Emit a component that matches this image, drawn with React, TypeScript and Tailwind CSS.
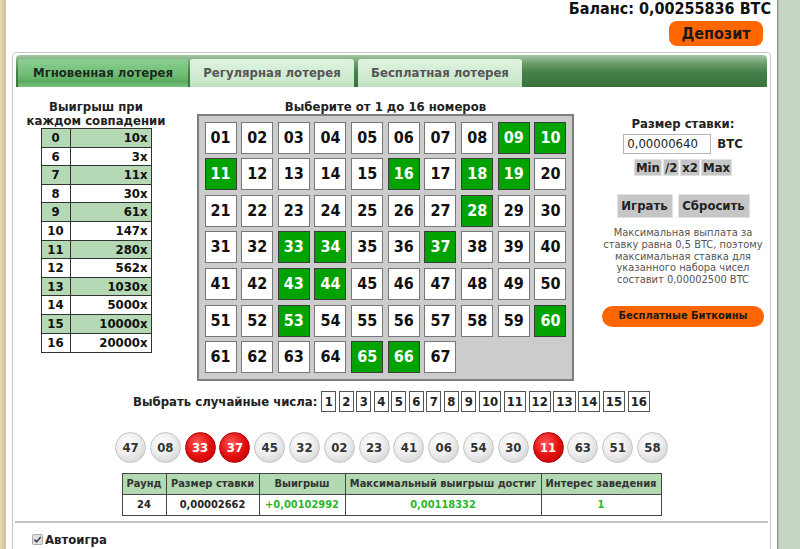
import React from "react";

const selected = new Set([9, 10, 11, 16, 18, 19, 28, 33, 34, 37, 43, 44, 53, 60, 65, 66]);

const payouts: [string, string][] = [
  ["0", "10x"],
  ["6", "3x"],
  ["7", "11x"],
  ["8", "30x"],
  ["9", "61x"],
  ["10", "147x"],
  ["11", "280x"],
  ["12", "562x"],
  ["13", "1030x"],
  ["14", "5000x"],
  ["15", "10000x"],
  ["16", "20000x"],
];

const balls: [string, boolean][] = [
  ["47", false],
  ["08", false],
  ["33", true],
  ["37", true],
  ["45", false],
  ["32", false],
  ["02", false],
  ["23", false],
  ["41", false],
  ["06", false],
  ["54", false],
  ["30", false],
  ["11", true],
  ["63", false],
  ["51", false],
  ["58", false],
];

function pad(n: number) {
  return n < 10 ? "0" + n : String(n);
}

export default function App() {
  const nums = Array.from({ length: 67 }, (_, i) => i + 1);
  const rnd = Array.from({ length: 16 }, (_, i) => i + 1);
  return (
    <div className="w-[800px] h-[549px] overflow-hidden flex bg-white font-['DejaVu_Sans_Condensed','DejaVu_Sans',sans-serif] text-[#111]">
      {/* left decorative strip */}
      <div className="w-[5px] shrink-0 bg-[linear-gradient(to_right,#e6dbb8,#cfc096)]" />
      <div className="w-[1px] shrink-0 bg-[#c9c9c9]" />

      {/* main column */}
      <div className="w-[771px] shrink-0 flex flex-col">
        {/* header */}
        <div className="shrink-0 flex flex-col items-end h-[52px]">
          <div className="pr-[6px] text-[16px] leading-[17px] font-bold text-[#111]">Баланс: 0,00255836 BTC</div>
          <div className="mr-[14px] mt-[4px] w-[94px] h-[25px] rounded-[8px] bg-[#ff6600] flex items-center justify-center text-[16px] font-bold text-[#1a1a1a]">
            Депозит
          </div>
        </div>

        {/* panel */}
        <div className="shrink-0 ml-[6px] w-[759px] h-[520px] border border-[#c8c8c8] rounded-[4px] px-[3px] pt-[2px]">
          {/* tab bar */}
          <div className="h-[32px] rounded-t-[4px] bg-[linear-gradient(to_bottom,#a6c7a6_0%,#6e9f6e_25%,#44804a_55%,#3a733b_100%)] flex items-end pl-[2px] gap-[2px]">
            <div className="w-[170px] h-[28px] rounded-t-[3px] bg-[linear-gradient(to_bottom,#8ccf91_0%,#6fbe74_55%,#5aaa5f_80%,#7cc381_100%)] flex items-center justify-center text-[13px] font-bold text-[#1c2a1c]">
              Мгновенная лотерея
            </div>
            <div className="w-[164px] h-[28px] rounded-t-[3px] bg-[linear-gradient(to_bottom,#dff3e0,#cdeacf_70%,#bfe0c2)] flex items-center justify-center text-[13px] font-bold text-[#555]">
              Регулярная лотерея
            </div>
            <div className="ml-[2px] w-[164px] h-[28px] rounded-t-[3px] bg-[linear-gradient(to_bottom,#dff3e0,#cdeacf_70%,#bfe0c2)] flex items-center justify-center text-[13px] font-bold text-[#555]">
              Бесплатная лотерея
            </div>
          </div>

          {/* content row */}
          <div className="flex pt-[13px] -mx-[3px]">
            {/* left column: payouts */}
            <div className="w-[166px] flex flex-col items-center">
              <div className="text-[13px] leading-[14px] font-bold text-center text-[#222]">
                Выигрыш при
                <br />
                каждом совпадении
              </div>
              <div className="mt-[0px] w-[111px] border border-[#333] flex flex-col">
                {payouts.map(([a, b], i) => (
                  <div
                    key={a}
                    className={
                      "flex h-[18.6px] text-[13px] font-bold " +
                      (i < payouts.length - 1 ? "border-b border-[#333] " : "") +
                      (i % 2 === 0 ? "bg-[#b4d9b4]" : "bg-white")
                    }
                  >
                    <div className="w-[29px] border-r border-[#333] flex items-center justify-center">{a}</div>
                    <div className="flex-1 flex items-center justify-end pr-[3px]">{b}</div>
                  </div>
                ))}
              </div>
            </div>

            {/* grid column */}
            <div className="ml-[18px] w-[377px] flex flex-col items-center">
              <div className="text-[13px] leading-[14px] font-bold text-[#222]">Выберите от 1 до 16 номеров</div>
              <div className="w-[377px] border-2 border-[#7e7e7e] bg-[#cccccc] p-[5.5px] grid grid-cols-10 gap-[4.67px]">
                {nums.map((n) => {
                  const s = selected.has(n);
                  return (
                    <div
                      key={n}
                      className={
                        "w-[32px] h-[32px] flex items-center justify-center text-[16px] font-bold border " +
                        (s ? "bg-[#00a300] border-[#3c3c3c] text-white" : "bg-white border-[#777] text-[#111]")
                      }
                    >
                      {pad(n)}
                    </div>
                  );
                })}
              </div>
            </div>

            {/* right column */}
            <div className="ml-[24px] w-[170px] flex flex-col items-center pt-[17px]">
              <div className="text-[13px] leading-[14px] font-bold text-[#222]">Размер ставки:</div>
              <div className="mt-[3px] flex items-center">
                <div className="w-[88px] h-[20px] border border-[#b5b5b5] bg-white flex items-center pl-[3px] text-[13px] text-[#222]">
                  0,00000640
                </div>
                <div className="ml-[6px] text-[13px] font-bold text-[#222]">BTC</div>
              </div>
              <div className="mt-[5px] flex gap-[1px] h-[17px]">
                {["Min", "/2", "x2", "Max"].map((t) => (
                  <div
                    key={t}
                    className="px-[1px] bg-[#c6c6c6] border border-[#e0e0e0] flex items-center justify-center text-[13px] font-bold text-[#222]"
                  >
                    {t}
                  </div>
                ))}
              </div>
              <div className="mt-[18px] flex gap-[5px]">
                <div className="w-[56px] h-[24px] bg-[#c6c6c6] border border-[#e2e2e2] flex items-center justify-center text-[13px] font-bold text-[#222]">
                  Играть
                </div>
                <div className="w-[72px] h-[24px] bg-[#c6c6c6] border border-[#e2e2e2] flex items-center justify-center text-[13px] font-bold text-[#222]">
                  Сбросить
                </div>
              </div>
              <div className="mt-[9px] text-[11px] leading-[11.75px] text-[#555] text-center">
                Максимальная выплата за
                <br />
                ставку равна 0,5 BTC, поэтому
                <br />
                максимальная ставка для
                <br />
                указанного набора чисел
                <br />
                составит 0,00002500 BTC
              </div>
              <div className="mt-[20px] w-[162px] h-[21px] rounded-full bg-[#ff6600] flex items-center justify-center text-[11px] font-bold text-[#1a1a1a]">
                Бесплатные Биткоины
              </div>
            </div>
          </div>

          {/* random picks */}
          <div className="mt-[10px] flex items-center justify-center -mx-[3px]">
            <div className="text-[13px] font-bold text-[#222] mr-[4px]">Выбрать случайные числа:</div>
            <div className="flex gap-[2.5px]">
              {rnd.map((n) => (
                <div
                  key={n}
                  className="h-[21px] px-[2px] min-w-[15px] border border-[#555] bg-white flex items-center justify-center text-[13px] font-bold text-[#222]"
                >
                  {n}
                </div>
              ))}
            </div>
          </div>

          {/* balls */}
          <div className="mt-[20px] flex justify-center gap-[3.8px] -mx-[3px]">
            {balls.map(([t, red], i) => (
              <div
                key={i}
                className={
                  "w-[31px] h-[31px] rounded-full flex items-center justify-center text-[13px] font-bold " +
                  (red
                    ? "bg-[radial-gradient(circle_at_40%_35%,#ff5a5a_0%,#e41010_50%,#b80000_100%)] text-white border border-[#b00000]"
                    : "bg-[radial-gradient(circle_at_40%_35%,#ffffff_0%,#eeeeee_45%,#c9c9c9_100%)] text-[#333] border border-[#c4c4c4]")
                }
              >
                {t}
              </div>
            ))}
          </div>

          {/* results table */}
          <div className="mt-[10px] flex justify-center -mx-[3px]">
            <div className="w-[540px] border border-[#444] text-[11px] font-bold">
              <div className="flex h-[21px] bg-[#b2d9b2] border-b border-[#444] text-[#333]">
                <div className="w-[44px] border-r border-[#444] flex items-center justify-center">Раунд</div>
                <div className="w-[93px] border-r border-[#444] flex items-center justify-center">Размер ставки</div>
                <div className="w-[86px] border-r border-[#444] flex items-center justify-center">Выигрыш</div>
                <div className="w-[196px] border-r border-[#444] flex items-center justify-center">Максимальный выигрыш достиг</div>
                <div className="flex-1 flex items-center justify-center">Интерес заведения</div>
              </div>
              <div className="flex h-[20px] bg-white">
                <div className="w-[44px] border-r border-[#444] flex items-center justify-center text-[#222]">24</div>
                <div className="w-[93px] border-r border-[#444] flex items-center justify-center text-[#222]">0,00002662</div>
                <div className="w-[86px] border-r border-[#444] flex items-center justify-center text-[#29b829]">+0,00102992</div>
                <div className="w-[196px] border-r border-[#444] flex items-center justify-center text-[#29b829]">0,00118332</div>
                <div className="flex-1 flex items-center justify-center text-[#29b829]">1</div>
              </div>
            </div>
          </div>

          {/* divider */}
          <div className="mt-[5px] h-[2px] bg-[#c4c4c4] -mx-[1px]" />

          {/* autoplay */}
          <div className="mt-[7px] flex items-center pl-[16px]">
            <div className="w-[11px] h-[11px] rounded-[2px] border border-[#a8a8a8] bg-[#e2e2e2] flex items-center justify-center">
              <svg width="9" height="9" viewBox="0 0 10 10">
                <path d="M1.5 5.2 L4 7.6 L8.6 2.2" stroke="#444" strokeWidth="1.8" fill="none" />
              </svg>
            </div>
            <div className="ml-[2px] text-[13px] font-bold text-[#222]">Автоигра</div>
          </div>
        </div>
      </div>

      {/* right edge */}
      <div className="w-[1px] shrink-0 bg-[#8d978d]" />
      <div className="w-[1px] shrink-0 bg-[#b3bfb1]" />
      <div className="flex-1 bg-[#c6d5c4]" />
    </div>
  );
}
